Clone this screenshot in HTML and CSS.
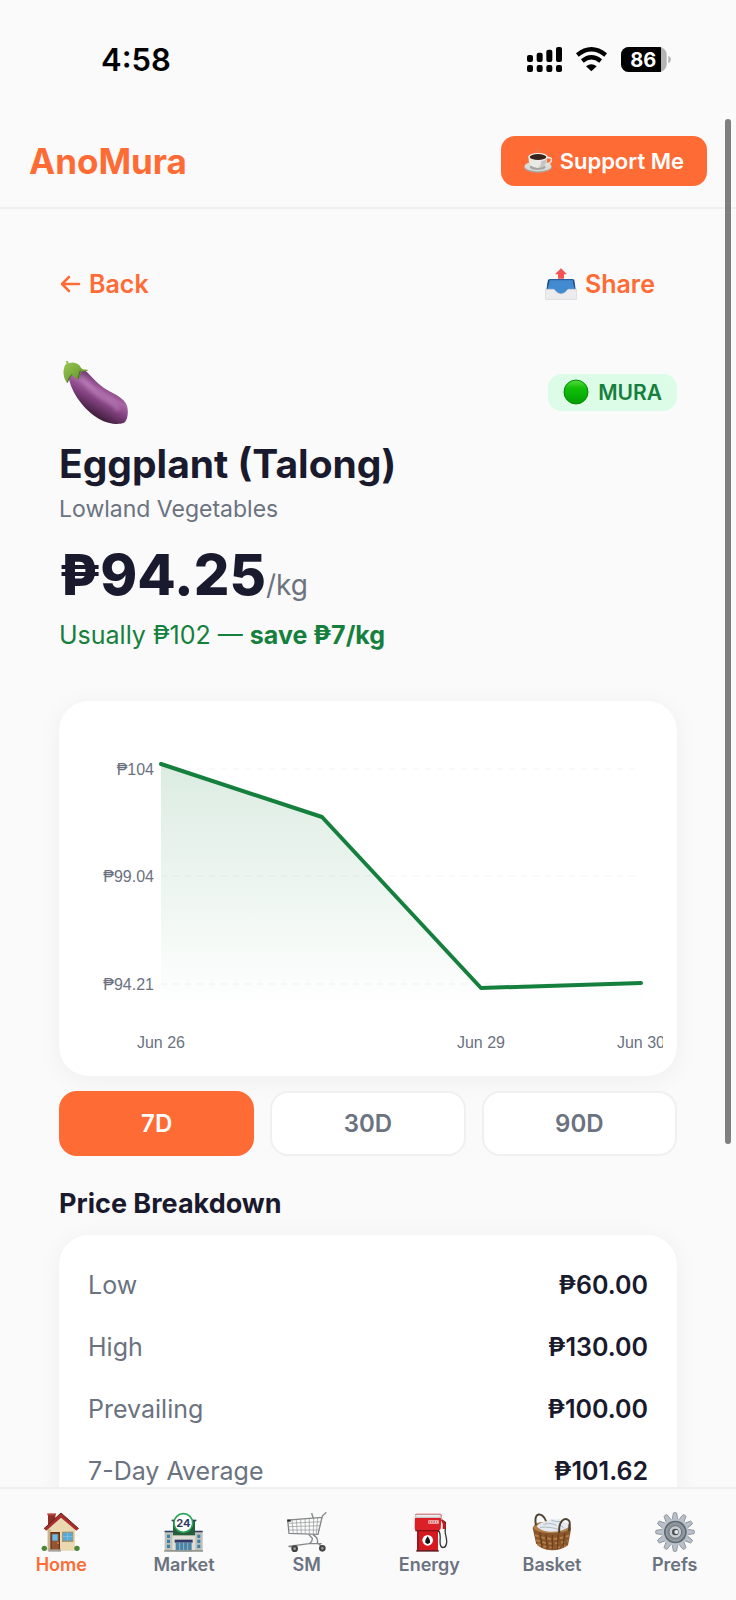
FILE: index.html
```html
<!DOCTYPE html>
<html lang="en">
<head>
    <meta charset="UTF-8">
    <meta name="viewport" content="width=device-width, initial-scale=1.0">
    <title>AnoMura - Eggplant (Talong)</title>
    <link rel="stylesheet" href="styles.css">
</head>
<body>
    <div class="app">
        <div class="status-bar">
            <span class="time">4:58</span>
            <div class="status-icons">
                <svg width="35" height="25" viewBox="0 0 105 75">
                    <rect x="0" y="24" width="18" height="21" rx="6"/>
                    <rect x="29" y="17" width="18" height="28" rx="6"/>
                    <rect x="58" y="8" width="18" height="37" rx="6"/>
                    <rect x="87" y="0" width="18" height="45" rx="6"/>
                    <rect x="0" y="54" width="18" height="21" rx="6"/>
                    <rect x="29" y="54" width="18" height="21" rx="6"/>
                    <rect x="58" y="54" width="18" height="21" rx="6"/>
                    <rect x="87" y="54" width="18" height="21" rx="6"/>
                </svg>
                <svg width="31" height="25" viewBox="0 0 93 75">
                    <path d="M4 24 Q46 -10 89 24" fill="none" stroke="#000" stroke-width="13"/>
                    <path d="M19 42 Q46 20 74 42" fill="none" stroke="#000" stroke-width="13"/>
                    <path d="M46 73 L30 58 Q46 46 62 58 Z"/>
                </svg>
                <svg width="50" height="25" viewBox="0 0 150 75">
                    <defs>
                        <clipPath id="charge"><rect width="120" height="75"/></clipPath>
                    </defs>
                    <rect width="137" height="75" rx="23" fill="#b3b3b3"/>
                    <rect width="137" height="75" rx="23" clip-path="url(#charge)"/>
                    <path d="M142 26 Q150 30 150 37 Q150 45 142 49 Z" fill="#b3b3b3"/>
                    <text class="battery-level" x="67" y="60">86</text>
                </svg>
            </div>
        </div>

        <header class="header">
            <a class="logo" href="#">AnoMura</a>
            <button class="support">
                <svg width="28" height="28" viewBox="0 0 84 84">
                    <ellipse cx="42" cy="61" rx="41" ry="16" fill="#a9aaa7"/>
                    <ellipse cx="42" cy="58" rx="40" ry="15" fill="#dcdcd8"/>
                    <ellipse cx="41" cy="61" rx="24" ry="8" fill="#a5a6a3"/>
                    <path d="M68 32 Q86 30 82 42 Q79 51 63 51" fill="none" stroke="#e6e6e2" stroke-width="5"/>
                    <path d="M13 29 Q13 62 41 63 Q70 62 70 29 Z" fill="#e9e9e5"/>
                    <path d="M52 42 Q66 40 69 30 Q70 62 41 63 Q51 58 52 42" fill="#c5c6c2"/>
                    <ellipse cx="42" cy="29" rx="29" ry="11" fill="#f7f7f4"/>
                    <ellipse cx="42" cy="30" rx="25" ry="9" fill="#39231b"/>
                    <path d="M40 17 Q33 11 40 5 M46 17 Q52 11 45 6" fill="none" stroke="#d5855f" stroke-width="3"/>
                </svg>
                Support Me
            </button>
        </header>

        <main class="content">
            <div class="top-row">
                <a class="link" href="#">
                    <svg width="22" height="22" viewBox="0 0 22 22">
                        <path d="M20 11H3M10 4L3 11L10 18" fill="none" stroke="#ff6b35" stroke-width="2.5" stroke-linecap="round" stroke-linejoin="round"/>
                    </svg>
                    Back
                </a>
                <button class="link share">
                    <svg width="32" height="32" viewBox="0 0 96 96">
                        <path d="M9 35 L14 33 H83 L88 35 L92 65 H4 Z" fill="#285d9b"/>
                        <path d="M14 37 H83 L89 64 H68 Q62 78 48 78 Q34 78 28 64 H7 Z" fill="#438bd1"/>
                        <path d="M14 37 L7 64 V50 L10 37 M83 37 L89 64 V50 L86 37" fill="#204b7d"/>
                        <path d="M1 64 H27 Q36 78 48 78 Q60 78 69 64 H95 V92 Q95 95 92 95 H4 Q1 95 1 92 Z" fill="#ecebed" stroke="#d2d2d5" stroke-width="2"/>
                        <path d="M48 1 L66 19 H57 V32 H39 V19 H30 Z" fill="#f65252"/>
                    </svg>
                    Share
                </button>
            </div>

            <div class="item-top">
                <svg width="72" height="72" viewBox="0 0 216 216">
                    <defs>
                        <linearGradient id="skin" x1="0.65" y1="0.2" x2="0.3" y2="0.75">
                            <stop offset="0" stop-color="#653061"/>
                            <stop offset="0.35" stop-color="#a965a5"/>
                            <stop offset="0.6" stop-color="#854383"/>
                            <stop offset="1" stop-color="#44203f"/>
                        </linearGradient>
                        <linearGradient id="leaf" x1="0" y1="0" x2="1" y2="1">
                            <stop offset="0" stop-color="#99c855"/>
                            <stop offset="1" stop-color="#5a8b20"/>
                        </linearGradient>
                        <filter id="soft"><feGaussianBlur stdDeviation="6"/></filter>
                    </defs>
                    <path d="M28 60 C36 112 78 164 119 188 C148 205 178 206 194 201 C207 194 209 166 204 149 C195 126 167 115 146 103 C119 88 102 65 77 42 Z" fill="url(#skin)"/>
                    <path d="M70 67 C94 95 114 119 147 133 C162 140 172 149 176 159" fill="none" stroke="#cf9bd0" stroke-width="12" stroke-linecap="round" opacity="0.5" filter="url(#soft)"/>
                    <path d="M20 16 L27 15 L29 22 C44 15 60 22 66 35 C72 43 80 39 88 42 Q83 48 70 45 C63 46 64 57 58 71 Q44 63 38 57 Q30 64 25 82 C15 69 11 52 15 37 C16 28 21 24 23 23 Z" fill="url(#leaf)"/>
                    <path d="M64 43 Q61 53 57 69 M39 55 Q29 64 25 80" fill="none" stroke="#426923" stroke-width="3"/>
                </svg>
                <span class="badge">
                    <svg width="26" height="26" viewBox="0 0 26 26">
                        <defs>
                            <linearGradient id="dot" x1="0" y1="0" x2="0" y2="1">
                                <stop offset="0" stop-color="#55de3d"/>
                                <stop offset="0.35" stop-color="#12bd09"/>
                                <stop offset="1" stop-color="#00a000"/>
                            </linearGradient>
                        </defs>
                        <circle cx="13" cy="13" r="12" fill="url(#dot)" stroke="#078508"/>
                    </svg>
                    MURA
                </span>
            </div>
            <h1>Eggplant (Talong)</h1>
            <p class="category">Lowland Vegetables</p>
            <p class="price">₱94.25<span class="unit">/kg</span></p>
            <p class="usual">Usually ₱102 — <strong>save ₱7/kg</strong></p>

            <div class="card chart">
                <svg viewBox="0 0 590 347" role="img" aria-label="Price history">
                    <defs>
                        <linearGradient id="area" x1="0" y1="0" x2="0" y2="1">
                            <stop offset="0" stop-color="#15803d" stop-opacity="0.15"/>
                            <stop offset="1" stop-color="#15803d" stop-opacity="0"/>
                        </linearGradient>
                    </defs>
                    <path class="grid-line" d="M88 54H568M88 161H568M88 269H568"/>
                    <path d="M88 49L249 102L408 273L568 268V297H88Z" fill="url(#area)"/>
                    <path class="line" d="M88 49L249 102L408 273L568 268"/>
                    <g class="y-labels">
                        <text x="81" y="60">₱104</text>
                        <text x="81" y="167">₱99.04</text>
                        <text x="81" y="275">₱94.21</text>
                    </g>
                    <g class="x-labels">
                        <text x="88" y="333">Jun 26</text>
                        <text x="408" y="333">Jun 29</text>
                        <text x="568" y="333">Jun 30</text>
                    </g>
                </svg>
            </div>

            <div class="ranges">
                <button class="range active">7D</button>
                <button class="range">30D</button>
                <button class="range">90D</button>
            </div>

            <h2>Price Breakdown</h2>
            <div class="card breakdown">
                <table>
                    <tr><th scope="row">Low</th><td>₱60.00</td></tr>
                    <tr><th scope="row">High</th><td>₱130.00</td></tr>
                    <tr><th scope="row">Prevailing</th><td>₱100.00</td></tr>
                    <tr><th scope="row">7-Day Average</th><td>₱101.62</td></tr>
                </table>
            </div>
        </main>

        <nav class="nav">
            <a class="nav-item active" href="#">
                <svg width="40" height="40" viewBox="0 0 120 120">
                    <path d="M21 6 H43 V30 L21 48 Z" fill="#8f2f28"/>
                    <path d="M19 4 H45 V10 H19 Z" fill="#b64a3c"/>
                    <path d="M20 52 L60 15 L102 52 V116 H20 Z" fill="#ead8b0"/>
                    <path d="M20 52 H29 V116 H20 Z" fill="#c9b58d"/>
                    <path d="M60 3 L9 50 L16 56 L60 17 L106 56 L113 50 Z" fill="#a92e2b"/>
                    <path d="M60 3 L9 50 M60 3 L113 50" stroke="#60221f" stroke-width="3"/>
                    <rect x="28" y="60" width="29" height="57" fill="#6b341f"/>
                    <rect x="32" y="65" width="21" height="49" fill="#955332"/>
                    <rect x="34" y="67" width="16" height="19" fill="#65bbec"/>
                    <circle cx="51" cy="93" r="2" fill="#f1d36e"/>
                    <rect x="63" y="59" width="34" height="31" fill="#ad9366"/>
                    <rect x="66" y="62" width="28" height="24" fill="#56a8d9"/>
                    <path d="M80 62 V86 M66 74 H94" stroke="#92c9e5" stroke-width="2"/>
                    <path d="M22 112 H60 V119 H22 Z" fill="#a5a39c"/>
                    <circle cx="10" cy="109" r="8" fill="#4b8734"/>
                    <circle cx="108" cy="109" r="8" fill="#4b8734"/>
                </svg>
                Home
            </a>
            <a class="nav-item" href="#">
                <svg width="40" height="40" viewBox="0 0 120 120">
                    <path d="M2 58 H116 V118 H2 Z" fill="#bfc0b9"/>
                    <path d="M2 56 H32 V61 H2 Z M86 56 H116 V61 H86 Z" fill="#303a68"/>
                    <path d="M27 25 H93 V77 H27 Z" fill="#285c3d"/>
                    <path d="M23 23 H97 V28 H23 Z" fill="#303a68"/>
                    <path d="M25 70 H94 V118 H25 Z" fill="#e0ded4"/>
                    <path d="M32 83 H86 V92 H32 Z" fill="#303a68"/>
                    <path d="M35 92 H83 V118 H35 Z" fill="#4b84a4"/>
                    <path d="M47 92 V118 M59 92 V118 M71 92 V118" stroke="#b6d0dc" stroke-width="2"/>
                    <path d="M9 68 H18 V78 H9 Z M9 83 H18 V93 H9 Z M9 98 H18 V108 H9 Z M100 68 H109 V78 H100 Z M100 83 H109 V93 H100 Z M100 98 H109 V108 H100 Z" fill="#3783a9"/>
                    <path d="M1 114 H117 V119 H1 Z" fill="#949792"/>
                    <circle cx="58" cy="33" r="28" fill="#fff" stroke="#27a457" stroke-width="5"/>
                    <text class="hours" x="58" y="45">24</text>
                </svg>
                Market
            </a>
            <a class="nav-item" href="#">
                <svg width="40" height="40" viewBox="0 0 120 120" fill="none" stroke="#85888a" stroke-width="4">
                    <path d="M118 1 L106 12 L93 67 L6 64 L2 24 L105 16"/>
                    <path d="M3 34 L103 29 M4 44 L100 41 M5 54 L97 54 M15 23 L19 64 M28 22 L31 65 M41 21 L43 66 M54 20 L55 66 M67 19 L67 66 M80 18 L79 67 M92 17 L88 67" stroke="#8f9294" stroke-width="2"/>
                    <path d="M74 3 Q76 12 80 20 M65 67 L76 79 Q76 91 66 95 L4 103 M78 68 Q95 79 91 92 L105 104 M66 95 H104 M4 103 L22 106"/>
                    <path d="M1 23 H11 V29 H1 Z" fill="#252525" stroke="none"/>
                    <circle cx="23" cy="110" r="7" fill="#999" stroke="#444" stroke-width="6"/>
                    <circle cx="106" cy="109" r="7" fill="#999" stroke="#444" stroke-width="6"/>
                </svg>
                SM
            </a>
            <a class="nav-item" href="#">
                <svg width="40" height="40" viewBox="0 0 120 120">
                    <path d="M98 23 L109 31 V53 C105 65 117 80 112 96 C109 110 96 109 94 98 C91 84 97 74 91 59 H86" fill="none" stroke="#36383a" stroke-width="4"/>
                    <path d="M96 23 Q109 25 110 36 V51 H101 V36 Z" fill="#c51a20"/>
                    <path d="M24 50 H87 V117 H24 Z" fill="#d41920"/>
                    <path d="M24 50 H30 V117 H24 Z" fill="#9c151b"/>
                    <path d="M18 8 Q18 5 22 5 H94 Q98 5 98 10 L95 50 Q94 55 88 55 H22 Q17 55 17 49 Z" fill="#dc2027"/>
                    <path d="M18 7 H97 V18 H18 Z" fill="#c8c8c8"/>
                    <path d="M22 9 H92 V14 H22 Z" fill="#f1f1f1"/>
                    <path d="M19 54 H91 V58 H19 Z" fill="#891015"/>
                    <rect x="58" y="25" width="31" height="10" fill="#f6d9d8"/>
                    <path d="M62 27 V33 M67 27 V33 M72 27 V33 M77 27 V33 M83 27 V33" stroke="#c42227" stroke-width="2"/>
                    <circle cx="56" cy="85" r="16" fill="#fff"/>
                    <path d="M56 73 Q65 85 63 91 Q56 101 49 91 Q47 85 56 73" fill="#151515"/>
                    <path d="M22 114 H89 V119 H22 Z" fill="#632126"/>
                </svg>
                Energy
            </a>
            <a class="nav-item" href="#">
                <svg width="40" height="40" viewBox="0 0 120 120">
                    <path d="M2 48 Q8 32 30 31 L99 33 Q119 38 117 52 L108 100 Q89 115 60 115 Q25 114 12 94 Z" fill="#8a552b"/>
                    <path d="M9 69 Q58 92 112 70 M13 84 Q58 104 109 86 M16 96 Q60 116 106 99" fill="none" stroke="#b27d42" stroke-width="6" stroke-dasharray="12 7"/>
                    <path d="M24 62 L30 103 M42 67 L46 110 M61 69 V112 M79 68 L76 111 M98 63 L93 106" stroke="#67401f" stroke-width="4"/>
                    <ellipse cx="60" cy="46" rx="56" ry="18" fill="#b18049"/>
                    <path d="M14 43 Q29 26 44 31 Q56 14 72 24 Q85 15 94 31 Q114 31 107 47 Q84 61 51 59 Q25 57 14 43" fill="#e4eaf0"/>
                    <path d="M34 37 Q60 31 74 41 M58 25 Q76 31 90 29 M24 46 Q56 43 80 53 M84 39 L97 49" fill="none" stroke="#aeb9c4" stroke-width="3"/>
                    <path d="M12 40 C4 0 31 -2 42 27 M82 64 C78 29 98 12 110 25 C117 31 113 46 110 58" fill="none" stroke="#514334" stroke-width="6"/>
                </svg>
                Basket
            </a>
            <a class="nav-item" href="#">
                <svg width="40" height="40" viewBox="0 0 120 120">
                    <g fill="#bac0c9" stroke="#737b84" stroke-width="2">
                        <path id="tooth" d="M51 26 L55 3 Q60 0 65 3 L69 26 Z"/>
                        <use href="#tooth" transform="rotate(30 60 60)"/>
                        <use href="#tooth" transform="rotate(60 60 60)"/>
                        <use href="#tooth" transform="rotate(90 60 60)"/>
                        <use href="#tooth" transform="rotate(120 60 60)"/>
                        <use href="#tooth" transform="rotate(150 60 60)"/>
                        <use href="#tooth" transform="rotate(180 60 60)"/>
                        <use href="#tooth" transform="rotate(210 60 60)"/>
                        <use href="#tooth" transform="rotate(240 60 60)"/>
                        <use href="#tooth" transform="rotate(270 60 60)"/>
                        <use href="#tooth" transform="rotate(300 60 60)"/>
                        <use href="#tooth" transform="rotate(330 60 60)"/>
                    </g>
                    <circle cx="60" cy="60" r="40" fill="#bac0c9"/>
                    <circle cx="61" cy="60" r="34" fill="#5f676f"/>
                    <circle cx="61" cy="60" r="28" fill="#8a929a" stroke="#a9b0b7" stroke-width="2"/>
                    <circle cx="61" cy="60" r="19" fill="#c6ccd1" stroke="#6b737b" stroke-width="3"/>
                    <circle cx="61" cy="60" r="10" fill="#474e55"/>
                    <circle cx="64" cy="60" r="6" fill="#e8ebed"/>
                </svg>
                Prefs
            </a>
        </nav>
        <div class="scroll-thumb"></div>
    </div>
</body>
</html>
```
FILE: styles.css
```css
* {
    box-sizing: border-box;
}

body {
    margin: 0;
    font-family: Inter, "Liberation Sans", sans-serif;
    background-color: #fafafa;
    color: #1a1a2e;
}

svg {
    display: block;
    flex-shrink: 0;
}

a {
    text-decoration: none;
}

button {
    font-family: inherit;
    border: none;
    cursor: pointer;
}

h1, h2, p {
    margin: 0;
}

.app {
    position: relative;
    display: flex;
    flex-direction: column;
    height: 100vh;
    overflow: hidden;
}

.status-bar {
    display: flex;
    justify-content: space-between;
    align-items: center;
    flex-shrink: 0;
    height: 119px;
    padding: 0 65px 0 101px;
    color: #000;
}

.time {
    font-size: 31px;
    font-weight: 600;
}

.status-icons {
    display: flex;
    align-items: center;
    gap: 14px;
}

.battery-level {
    font-size: 60px;
    font-weight: 700;
    fill: #fff;
    text-anchor: middle;
}

.header {
    display: flex;
    justify-content: space-between;
    align-items: center;
    flex-shrink: 0;
    height: 90px;
    padding: 0 29px 5px;
    border-bottom: 2px solid #f0f0f1;
}

.logo {
    font-size: 35px;
    font-weight: 700;
    color: #ff6b35;
}

.support {
    display: flex;
    align-items: center;
    gap: 8px;
    height: 50px;
    padding: 0 23px;
    border-radius: 14px;
    background-color: #ff6b35;
    color: #fff;
    font-size: 22px;
    font-weight: 600;
}

.content {
    flex: 1;
    min-height: 0;
    padding: 39px 59px;
    overflow-y: auto;
    scrollbar-width: none;
}

.top-row,
.item-top {
    display: flex;
    justify-content: space-between;
    align-items: center;
    height: 72px;
}

.item-top {
    margin-top: 36px;
}

.link {
    display: flex;
    align-items: center;
    gap: 8px;
    padding: 0;
    background: none;
    color: #ff6b35;
    font-size: 25px;
    font-weight: 600;
}

.share {
    padding-right: 22px;
}

.badge {
    display: flex;
    align-items: center;
    gap: 9px;
    height: 37px;
    padding: 0 15px;
    border-radius: 14px;
    background-color: #dcfce7;
    color: #15803d;
    font-size: 21px;
    font-weight: 600;
}

h1 {
    margin-top: 12px;
    font-size: 39px;
    line-height: 48px;
    font-weight: 700;
}

.category {
    margin-top: 5px;
    font-size: 23px;
    line-height: 32px;
    color: #6b7280;
}

.price {
    margin-top: 16px;
    font-size: 56px;
    line-height: 68px;
    font-weight: 800;
}

.unit {
    font-size: 28px;
    font-weight: 400;
    color: #6b7280;
}

.usual {
    font-size: 25px;
    line-height: 32px;
    color: #15803d;
}

.card {
    background-color: #fff;
    border-radius: 30px;
    box-shadow: 0 4px 24px rgba(0, 0, 0, 0.05);
}

.chart {
    margin-top: 50px;
    padding: 14px;
}

.chart svg {
    width: 100%;
    overflow: hidden;
}

.chart text {
    font-family: "Liberation Sans", Arial, sans-serif;
    font-size: 16px;
    fill: #6b7280;
}

.y-labels {
    text-anchor: end;
}

.x-labels {
    text-anchor: middle;
}

.grid-line {
    fill: none;
    stroke: #f3f3f5;
    stroke-dasharray: 6 6;
}

.line {
    fill: none;
    stroke: #15803d;
    stroke-width: 4;
    stroke-linecap: round;
    stroke-linejoin: round;
}

.ranges {
    display: grid;
    grid-template-columns: repeat(3, 1fr);
    gap: 16px;
    margin-top: 15px;
}

.range {
    height: 65px;
    border: 2px solid #f0f0f1;
    border-radius: 18px;
    background-color: #fff;
    color: #6b7280;
    font-size: 24px;
    font-weight: 600;
}

.range.active {
    border-color: #ff6b35;
    background-color: #ff6b35;
    color: #fff;
}

h2 {
    margin: 31px 0 14px;
    font-size: 27px;
    line-height: 34px;
    font-weight: 700;
}

.breakdown {
    padding: 19px 29px;
}

.breakdown table {
    width: 100%;
    border-collapse: collapse;
    font-size: 25px;
}

.breakdown tr {
    height: 62px;
}

.breakdown th {
    padding: 0;
    text-align: left;
    font-weight: 400;
    color: #6b7280;
}

.breakdown td {
    padding: 0;
    text-align: right;
    font-weight: 600;
}

.nav {
    display: grid;
    grid-template-columns: repeat(6, 1fr);
    flex-shrink: 0;
    height: 113px;
    padding-top: 23px;
    border-top: 2px solid #f0f0f1;
    background-color: #fafafa;
}

.nav-item {
    display: flex;
    flex-direction: column;
    align-items: center;
    font-size: 18px;
    line-height: 26px;
    font-weight: 600;
    color: #6b7280;
}

.nav-item.active {
    color: #ff6b35;
}

.hours {
    font-size: 33px;
    font-weight: 700;
    fill: #303a68;
    text-anchor: middle;
}

.scroll-thumb {
    position: absolute;
    top: 119px;
    right: 5px;
    width: 6px;
    height: 1025px;
    border-radius: 3px;
    background-color: #7f7f7f;
}
```
